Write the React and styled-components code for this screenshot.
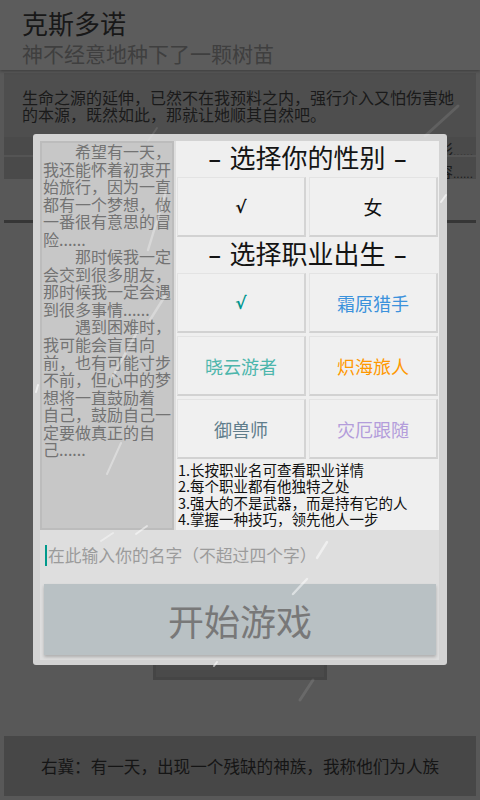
import React from "react";
import styled, { createGlobalStyle } from "styled-components";

const GlobalStyle = createGlobalStyle`
  html, body { margin: 0; padding: 0; background: #585858; }
  body {
    font-family: "Noto Sans CJK SC", "Noto Sans", sans-serif;
  }
  * { box-sizing: border-box; }
`;

const Screen = styled.div`
  position: relative;
  width: 480px;
  height: 800px;
  overflow: hidden;
  background: #585858;
  display: flex;
  flex-direction: column;
`;

const Header = styled.header`
  height: 70px;
  flex: none;
  background: #5c5c5c;
  box-shadow: 0 1px 3px rgba(0, 0, 0, 0.35);
  padding: 8px 22px 0;
  position: relative;
  z-index: 1;
`;

const Title = styled.div`
  font-size: 26px;
  line-height: 29px;
  color: #181818;
`;

const Subtitle = styled.div`
  font-size: 21px;
  line-height: 33px;
  color: #3f3f3f;
`;

const StoryCard = styled.div`
  margin: 3px 4px 0;
  height: 64px;
  flex: none;
  background: #4e4e4e;
  padding: 16px 14px 0 18px;
  font-size: 16px;
  line-height: 17px;
  color: #1a1a1a;
`;

const ListBox = styled.div`
  margin: 0 4px;
  display: flex;
  flex-direction: column;
  gap: 2px;
  flex: none;
  background: #545454;
`;

const ListRow = styled.div`
  height: ${(p) => p.$h}px;
  line-height: ${(p) => p.$h + 6}px;
  background: #4a4a4a;
  text-align: right;
  padding-right: 3px;
  font-size: 16px;
  color: #1c1c1c;
  overflow: hidden;
  white-space: nowrap;
`;

const Dots = styled.span`
  font-family: "Liberation Sans", sans-serif;
  font-size: 12px;
`;

const Spacer = styled.div`
  height: ${(p) => p.$h}px;
  flex: none;
`;

const Divider = styled.div`
  margin: 0 4px;
  height: 3px;
  flex: none;
  background: #363636;
`;

const Middle = styled.div`
  flex: 1;
  display: flex;
  flex-direction: column;
  align-items: center;
  justify-content: flex-end;
  padding-bottom: 56px;
`;

const HiddenButton = styled.div`
  width: 174px;
  height: 60px;
  background: #4a4a4a;
  border: 3px solid #454545;
`;

const BottomBar = styled.footer`
  margin: 0 4px 4px;
  height: 60px;
  flex: none;
  background: #474747;
  display: flex;
  align-items: center;
  justify-content: center;
  font-size: 16.6px;
  color: #151515;
`;

/* Dialog */
const Dialog = styled.div`
  position: absolute;
  left: 33px;
  top: 134px;
  width: 414px;
  height: 531px;
  background: #d3d3d3;
  border-radius: 3px;
  padding: 7px 8px 5px 7px;
  z-index: 5;
`;

const DialogBody = styled.div`
  height: 100%;
  background: #dedede;
  display: flex;
  flex-direction: column;
`;

const Panels = styled.div`
  height: 389px;
  display: flex;
  gap: 2px;
`;

const StoryPanel = styled.div`
  width: 134px;
  flex: none;
  background: #c7c7c7;
  border: 2px solid #bcbcbc;
  padding: 0 0 0 1px;
  font-size: 16px;
  line-height: 17.55px;
  color: #737373;
  overflow: hidden;
  word-break: break-all;
`;

const Para = styled.p`
  margin: 0;
  text-indent: 2em;
`;

const NoWrap = styled.span`
  white-space: nowrap;
`;

const ChoicePanel = styled.div`
  flex: 1;
  background: #efefef;
  padding: 1px;
  display: flex;
  flex-direction: column;
`;

const Heading = styled.div`
  height: ${(p) => p.$h}px;
  line-height: ${(p) => p.$h}px;
  text-align: center;
  font-family: "DejaVu Sans", "Noto Sans CJK SC", sans-serif;
  font-size: 26px;
  color: #141414;
  white-space: nowrap;
`;

const OptionGrid = styled.div`
  display: grid;
  grid-template-columns: 1fr 1fr;
  grid-auto-rows: 60px;
  gap: 3px;
`;

const Option = styled.div`
  background: #f0f0f0;
  border: 1px solid #e3e3e3;
  border-right: 2px solid #d4d4d4;
  border-bottom: 2px solid #d2d2d2;
  display: flex;
  align-items: center;
  justify-content: center;
  font-size: ${(p) => p.$size || 18}px;
  color: ${(p) => p.$color || "#111"};
`;

const Check = styled.span`
  font-family: "DejaVu Sans", sans-serif;
  font-weight: bold;
  font-size: 17px;
`;

const Tips = styled.div`
  padding: 3px 0 0 1px;
  font-size: 14.5px;
  line-height: 16.4px;
  color: #111;
`;

const Field = styled.div`
  height: 50px;
  margin-bottom: 4px;
  display: flex;
  align-items: center;
  padding-left: 5px;
`;

const Caret = styled.span`
  width: 2px;
  height: 21px;
  background: #009a8c;
  flex: none;
`;

const Placeholder = styled.span`
  font-size: 16.8px;
  color: #9b9b9b;
  margin-left: 1px;
  white-space: nowrap;
`;

const StartButton = styled.div`
  height: 71px;
  margin: 0 3px 0 4px;
  background: #b9c1c4;
  box-shadow: 0 2px 3px rgba(0, 0, 0, 0.22);
  display: flex;
  align-items: center;
  justify-content: center;
  font-size: 36px;
  color: #787878;
`;

const Streaks = styled.svg`
  position: absolute;
  left: 0;
  top: 0;
  width: 480px;
  height: 800px;
  pointer-events: none;
  z-index: 10;
`;

const streaks = [
  [458, 106, 425, 136, 0.1, 3],
  [157, 128, 148, 141, 0.1, 2],
  [167, 188, 148, 250, 0.3, 2.5],
  [165, 296, 150, 320, 0.3, 2.5],
  [137, 332, 112, 378, 0.35, 2.5],
  [121, 443, 107, 474, 0.35, 2],
  [38, 385, 36, 392, 0.6, 2],
  [327, 542, 317, 558, 0.5, 2.5],
  [307, 579, 293, 594, 0.5, 2.5],
  [147, 526, 136, 534, 0.5, 2],
  [113, 533, 101, 541, 0.4, 2],
  [313, 680, 300, 700, 0.1, 3],
  [446, 195, 441, 202, 0.6, 2],
  [217, 662, 214, 666, 0.6, 2],
];

const jobs = [
  { label: "霜原猎手", color: "#3c92dc" },
  { label: "晓云游者", color: "#4db6ac" },
  { label: "炽海旅人", color: "#ff9800" },
  { label: "御兽师", color: "#607d8b" },
  { label: "灾厄跟随", color: "#b39ddb" },
];

export default function App() {
  return (
    <>
      <GlobalStyle />
      <Screen>
        <Header>
          <Title>克斯多诺</Title>
          <Subtitle>神不经意地种下了一颗树苗</Subtitle>
        </Header>
        <StoryCard>
          生命之源的延伸，已然不在我预料之内，强行介入又怕伤害她的本源，既然如此，那就让她顺其自然吧。
        </StoryCard>
        <ListBox>
          <ListRow $h={18}>无尽的精彩<Dots>......</Dots></ListRow>
          <ListRow $h={22}>更多的内容<Dots>......</Dots></ListRow>
        </ListBox>
        <Spacer $h={41} />
        <Divider />
        <Middle>
          <HiddenButton />
        </Middle>
        <BottomBar>右冀：有一天，出现一个残缺的神族，我称他们为人族</BottomBar>

        <Dialog>
          <DialogBody>
            <Panels>
              <StoryPanel>
                <Para>希望有一天，我还能怀着初衷开始旅行，因为一直都有一个梦想，做一番很有意思的冒险......</Para>
                <Para>那时候我一定会交到很多朋友，那时候我一定会遇到很多事情......</Para>
                <Para>遇到困难时，我可能会盲目向前，也有可能寸步不前，但心中的梦想将一直鼓励着<NoWrap>自己，</NoWrap>鼓励自己一定要做真正的自己......</Para>
              </StoryPanel>
              <ChoicePanel>
                <Heading $h={35}>– 选择你的性别 –</Heading>
                <OptionGrid>
                  <Option><Check>√</Check></Option>
                  <Option $size={19}>女</Option>
                </OptionGrid>
                <Heading $h={36}>– 选择职业出生 –</Heading>
                <OptionGrid>
                  <Option $color="#00968f"><Check>√</Check></Option>
                  {jobs.map((j) => (
                    <Option key={j.label} $color={j.color}>
                      {j.label}
                    </Option>
                  ))}
                </OptionGrid>
                <Tips>
                  <div>1.长按职业名可查看职业详情</div>
                  <div>2.每个职业都有他独特之处</div>
                  <div>3.强大的不是武器，而是持有它的人</div>
                  <div>4.掌握一种技巧，领先他人一步</div>
                </Tips>
              </ChoicePanel>
            </Panels>
            <Field>
              <Caret />
              <Placeholder>在此输入你的名字（不超过四个字）</Placeholder>
            </Field>
            <StartButton>开始游戏</StartButton>
          </DialogBody>
        </Dialog>

        <Streaks viewBox="0 0 480 800">
          {streaks.map(([x1, y1, x2, y2, o, w], i) => (
            <line
              key={i}
              x1={x1}
              y1={y1}
              x2={x2}
              y2={y2}
              stroke="#ffffff"
              strokeOpacity={o}
              strokeWidth={w}
              strokeLinecap="round"
            />
          ))}
        </Streaks>
      </Screen>
    </>
  );
}
